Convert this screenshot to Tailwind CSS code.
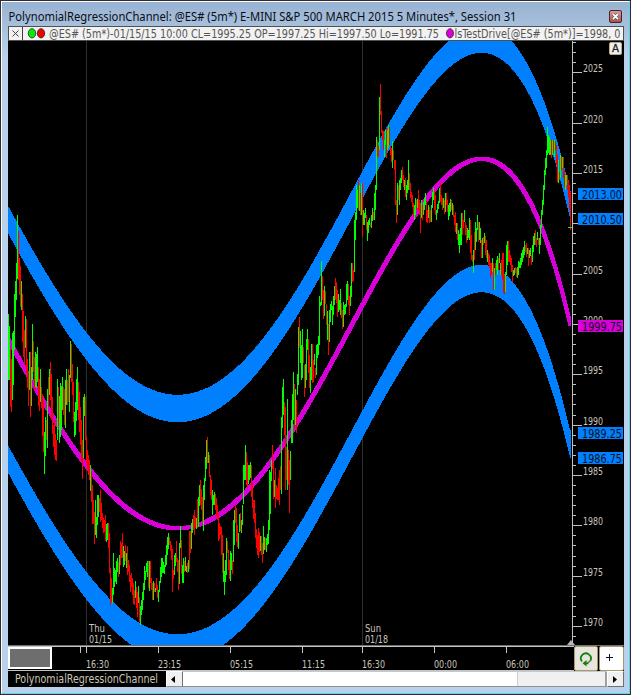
<!DOCTYPE html>
<html lang="en">
<head>
    <meta charset="UTF-8">
    <meta name="viewport" content="width=device-width, initial-scale=1.0">
    <title>PolynomialRegressionChannel</title>
    <script src="https://cdn.jsdelivr.net/npm/@tailwindcss/browser@4"></script>
</head>
<body class="bg-[#b9d1ea] overflow-hidden">
    <div class="flex flex-col w-[631px] h-[695px] border border-[#302c33]">
        <div class="flex flex-col flex-1 border border-t-white border-l-white border-r-[#5ed0e8] border-b-[#5ed0e8] bg-[#b9d1ea] bg-linear-to-b from-[#98b3d2] from-0% to-[#b9d1ea] to-8% pl-1.5 pr-[5px]">

            <!-- Title bar -->
            <div class="flex items-center justify-between h-6">
                <svg class="block w-[540px] h-6" viewBox="8 2 540 24" font-family="Noto Sans, sans-serif" font-size="12.5" fill="#0c0c14">
                    <text x="8.5" y="21" textLength="508" lengthAdjust="spacingAndGlyphs">PolynomialRegressionChannel: @ES# (5m*) E-MINI S&amp;P 500 MARCH 2015 5 Minutes*, Session 31</text>
                </svg>
                <button class="flex items-center justify-center w-[13px] h-[13px] mr-0.5 mt-1 rounded-[2px] border border-[#4f2023] bg-linear-to-b from-[#d29c98] to-[#a8544f]">
                    <svg class="block w-[7px] h-[7px]" viewBox="0 0 7 7"><path d="M1 1L6 6M6 1L1 6" stroke="#454555" stroke-width="3"/><path d="M1 1L6 6M6 1L1 6" stroke="#fff" stroke-width="1.8"/></svg>
                </button>
            </div>

            <!-- Status line -->
            <div class="h-[15px] w-[616px] border border-[#505050] bg-[#f2f2f2] overflow-hidden">
                <svg class="block w-[614px] h-[13px]" viewBox="9 27 614 13" font-family="DejaVu Sans Condensed, DejaVu Sans, sans-serif" font-stretch="condensed" font-size="11.5" fill="#555">
                    <path d="M12.5 30.5L18.5 36.5M18.5 30.5L12.5 36.5" stroke="#444" stroke-width="1"/>
                    <path d="M22.5 26V41" stroke="#404040"/>
                    <ellipse cx="32" cy="33.3" rx="3.7" ry="4.6" fill="#00f000" stroke="#222" stroke-width=".8"/>
                    <ellipse cx="41" cy="33.3" rx="3.7" ry="4.6" fill="#f00000" stroke="#222" stroke-width=".8"/>
                    <text x="49" y="37.5" textLength="390" lengthAdjust="spacingAndGlyphs">@ES# (5m*)-01/15/15 10:00 CL=1995.25 OP=1997.25 Hi=1997.50 Lo=1991.75</text>
                    <ellipse cx="450" cy="33.3" rx="3.6" ry="4.6" fill="#d800d8" stroke="#333" stroke-width=".8"/>
                    <text x="454.5" y="37.5" textLength="166" lengthAdjust="spacingAndGlyphs">lsTestDrive[@ES# (5m*)]=1998, 0</text>
                </svg>
            </div>

            <!-- Plot -->
            <svg id="plot" class="block w-[616px] h-[604px] bg-black" viewBox="8 41 616 604" font-family="DejaVu Sans Condensed, DejaVu Sans, sans-serif" font-stretch="condensed">
                <path d="M86.5 41V645M362.5 41V645" stroke="#303030" shape-rendering="crispEdges"/>
                <g id="bands" fill="#0080ff" shape-rendering="crispEdges"></g>
                <path id="mid" fill="#d800d8" shape-rendering="crispEdges"/>
                <path id="down" stroke="#ff0000" shape-rendering="crispEdges"/>
                <path id="up" stroke="#00ff00" shape-rendering="crispEdges"/>
                <path id="ticks" stroke="#c0c0c0" fill="none" shape-rendering="crispEdges"/>
                <path d="M567 645L571 640L575 645Z" fill="#b8b8b8"/>
                <g font-size="10.5" fill="#c9c5bd">
                    <text x="89" y="632" textLength="16" lengthAdjust="spacingAndGlyphs">Thu</text>
                    <text x="89" y="643" textLength="23" lengthAdjust="spacingAndGlyphs">01/15</text>
                    <text x="365" y="632" textLength="16" lengthAdjust="spacingAndGlyphs">Sun</text>
                    <text x="365" y="643" textLength="23" lengthAdjust="spacingAndGlyphs">01/18</text>
                </g>
                <g id="prices" font-size="10.5" fill="#c9c5bd"></g>
                <g id="tags" font-size="11.5" fill="#101018"></g>
                <rect x="609.5" y="42.5" width="12" height="12" rx="1.5" fill="#efefec" stroke="#b9aa88"/>
                <text x="612" y="51.5" font-size="10.5" fill="#20242c" stroke="#20242c" stroke-width=".3" textLength="7" lengthAdjust="spacingAndGlyphs">A</text>
            </svg>

            <!-- Time axis -->
            <div class="flex h-[26px] w-[616px] bg-black border-t border-[#707070]">
                <svg class="block w-[566px] h-[25px]" viewBox="8 646 566 25" font-family="DejaVu Sans Condensed, DejaVu Sans, sans-serif" font-stretch="condensed" font-size="10.5" fill="#c9c5bd">
                    <path d="M8 646.5H574M8 670.5H574M80.5 647V653M86.5 647V653M158.5 647V653M230.5 647V653M302.5 647V653M362.5 647V653M434.5 647V653M506.5 647V653" stroke="#c4c4c4" shape-rendering="crispEdges"/>
                    <rect x="9" y="648" width="42" height="20" fill="#6e6e6e" stroke="#fff" stroke-width="2"/>
                    <text x="86" y="667.5" textLength="23" lengthAdjust="spacingAndGlyphs">16:30</text>
                    <text x="158" y="667.5" textLength="23" lengthAdjust="spacingAndGlyphs">23:15</text>
                    <text x="230" y="667.5" textLength="23" lengthAdjust="spacingAndGlyphs">05:15</text>
                    <text x="302" y="667.5" textLength="23" lengthAdjust="spacingAndGlyphs">11:15</text>
                    <text x="362" y="667.5" textLength="23" lengthAdjust="spacingAndGlyphs">16:30</text>
                    <text x="434" y="667.5" textLength="23" lengthAdjust="spacingAndGlyphs">00:00</text>
                    <text x="506" y="667.5" textLength="23" lengthAdjust="spacingAndGlyphs">06:00</text>
                </svg>
                <button class="flex items-center justify-center w-[24px] h-[25px] rounded-[2px] border border-[#a89870] bg-[#e8e6dc]">
                    <svg class="block w-[14px] h-[16px]" viewBox="0 0 14 16" fill="none">
                        <path d="M3 10.5A5 5 0 1 1 11.3 9.8" stroke="#128018" stroke-width="1.8"/>
                        <path d="M11.3 9.8L9 11.5" stroke="#666" stroke-width="1.5"/>
                        <path d="M3.5 12.3L7.5 9V11.2H9.5V13.2H7.5V15.6Z" fill="#108018"/>
                    </svg>
                </button>
                <button class="flex items-center justify-center w-[25px] h-[25px] ml-px pr-1 pb-0.5 rounded-[2px] border border-[#a89870] bg-white">
                    <svg class="block w-[7px] h-[7px]" viewBox="0 0 7 7"><path d="M0 3.5H7M3.5 0V7" stroke="#101020" shape-rendering="crispEdges"/></svg>
                </button>
            </div>

            <!-- Workspace tab and scroll bar -->
            <div class="flex h-4 w-[616px]">
                <div class="w-[158px] bg-black">
                    <svg class="block w-[158px] h-4" viewBox="8 671 158 16" font-family="DejaVu Sans Condensed, DejaVu Sans, sans-serif" font-stretch="condensed" font-size="11.5" fill="#ccc6b8">
                        <text x="15" y="683" textLength="143" lengthAdjust="spacingAndGlyphs">PolynomialRegressionChannel</text>
                    </svg>
                </div>
                <button class="flex items-center justify-center w-[17px] h-4 pr-1 bg-[#f0f0f0] border border-l-white border-t-white border-r-[#707070] border-b-[#909090]">
                    <svg class="block w-1 h-[7px]" viewBox="0 0 4 7"><path d="M4 0V7L0 3.5Z" fill="#000"/></svg>
                </button>
                <div class="flex justify-end flex-1 bg-white border-t border-b border-t-[#c8c8c8] border-b-[#909090]">
                    <div class="w-[90px] bg-[#f0f0f0] border-l border-l-[#d0d0d0] border-r-2 border-r-[#a0a0a0]"></div>
                </div>
                <button class="flex items-center justify-center w-[17px] h-4 pr-0.5 bg-[#f0f0f0] border border-l-white border-t-white border-r-[#707070] border-b-[#707070]">
                    <svg class="block w-1 h-[7px]" viewBox="0 0 4 7"><path d="M0 0V7L4 3.5Z" fill="#000"/></svg>
                </button>
            </div>
        </div>
    </div>

    <script>
        // Samples of the regression curve, [x, y]
        const curve = [
            [8, 339.5], [25, 370], [43, 400], [60, 428], [86.7, 466.5], [100, 482.5], [117, 500.5], [133, 514], [147, 521.5],
            [160, 525.7], [176, 527], [188, 526], [200, 522.5], [215, 516], [232, 506], [250, 488.5], [265, 470.5], [283, 444.5], [297, 422.5], [310, 400.5],
            [320, 383], [340, 345.5], [362, 304.5], [380, 272], [407, 227], [430, 194.5], [441, 181.5], [458, 166.5],
            [470, 161], [481, 159.2], [492, 161], [500, 165], [510, 173], [520, 185], [530, 202], [540, 224.5], [555, 267], [564, 299], [570, 325]
        ];
        const scale = x => (x - 289) / 281;

        // Least squares polynomial through the samples
        function fit(points, degree) {
            const n = degree + 1;
            const m = Array.from({ length: n }, () => new Array(n + 1).fill(0));
            points.forEach(([x, y]) => {
                const t = scale(x);
                for (let i = 0; i < n; i++) {
                    for (let j = 0; j < n; j++) m[i][j] += t ** (i + j);
                    m[i][n] += y * t ** i;
                }
            });
            for (let i = 0; i < n; i++) {
                for (let k = 0; k < n; k++) {
                    if (k === i) continue;
                    const f = m[k][i] / m[i][i];
                    for (let j = i; j <= n; j++) m[k][j] -= f * m[i][j];
                }
            }
            return m.map((row, i) => row[n] / row[i]);
        }

        const coef = fit(curve, 7);
        const curveY = x => coef.reduce((sum, c, i) => sum + c * scale(x) ** i, 0);

        function ribbon(top, bottom) {
            let upper = '', lower = '';
            for (let x = 8; x <= 571; x++) {
                const y = curveY(Math.min(x, 570));
                upper += (x === 8 ? 'M' : 'L') + x + ' ' + (y + top).toFixed(1);
                lower = 'L' + x + ' ' + (y + bottom).toFixed(1) + lower;
            }
            return upper + lower + 'Z';
        }

        document.getElementById('bands').innerHTML = `<path d="${ribbon(-133.5, -106)}"/><path d="${ribbon(106, 133.5)}"/>`;
        // The centre line is drawn with a square pen, so steep parts get taller
        let mid = '';
        for (let x = 8; x < 571; x++) {
            const a = curveY(Math.max(x - 1.5, 8)), b = curveY(Math.min(x + 2, 570));
            mid += `M${x} ${(Math.min(a, b) - 2).toFixed(1)}h1V${(Math.max(a, b) + 2).toFixed(1)}h-1Z`;
        }
        document.getElementById('mid').setAttribute('d', mid);

        // One price bar per pixel: first x of the row, then colour and high-low
        const bars = `
8 g314-380 g326-380 r349-407 r359-412 g333-400 g331-385 g294-350 g281-317 g263-300 g215-279
18 r231-280 r258-295 r266-307 g281-310 r294-342 r311-357 r330-365 g316-348 r319-373 r359-388
28 r373-406 g352-390 r352-417 g367-406 g324-380 r341-372 r357-390 g352-387 g354-388 g347-382
38 r367-406 r379-411 g369-402 r387-408 r394-436 r402-452 g432-474 g417-456 r420-440 g389-448
48 r377-407 g369-395 r362-400 r374-420 r397-434 r425-447 r420-455 r434-460 r440-461 g379-440
58 r387-425 g396-443 g383-437 g386-430 g377-410 r387-415 r389-425 g380-428 g369-405 r380-405
68 r369-402 g375-412 g341-378 r344-382 r364-395 r382-422 g412-437 g402-435 g379-421 g367-410
78 r382-420 r392-432 r407-445 r420-462 r440-479 g397-458 g394-416 r397-440 r437-463 r450-470
88 r455-475 r460-480 g465-491 r472-502 r485-524 r500-524 r512-544 g500-535 g517-538 g495-525
98 g495-517 r498-512 r490-522 r503-520 r513-528 r518-533 r520-532 r515-541 g524-542 g523-540
108 r523-548 r533-573 r568-605 r578-602 g588-603 g553-595 g568-587 g570-582 g561-584 g558-572
118 r562-577 g555-574 r541-565 r543-558 r533-558 g546-567 g551-565 r545-561 g553-568 r546-575
128 r560-572 r565-582 r575-592 r573-587 r578-595 r583-604 r590-605 g581-598 r587-608 r592-617
138 g586-603 r597-622 g606-625 g600-615 g592-610 g583-600 g566-590 g571-580 g563-572 g561-577
148 r561-588 g561-591 r561-583 r578-590 r583-600 g581-600 r583-592 g588-592 r578-590 r585-598
158 g590-602 g581-592 g567-583 g558-577 g558-573 g562-573 g565-574 g555-567 g545-565 g537-555
168 g533-549 r537-545 r541-551 r545-560 r549-592 r570-579 g555-575 g553-566 r541-562 r558-572
178 r560-590 g543-584 g526-548 r540-574 g565-583 g558-583 r561-572 g557-571 g566-572 r563-573
188 g560-572 r531-569 r531-553 g523-549 g519-533 r515-530 r510-535 r517-528 g518-529 r499-528
198 g497-527 g485-506 r480-505 r489-510 r497-522 g485-531 g478-500 g457-481 g440-469 r437-463
208 g452-463 r455-477 r475-495 r480-500 g490-515 g495-505 g492-505 r494-510 r498-516 r505-520
218 r514-541 r523-539 r526-535 r527-555 r535-573 g553-582 g571-595 g560-582 g538-575 r541-553
228 r550-570 r560-579 g551-581 g553-570 r560-574 g520-562 g510-545 r505-523 r508-542 r525-547
238 g533-549 g514-532 r513-531 g520-533 g505-525 g465-504 g465-480 g445-480 r452-485 r462-488
248 g465-484 g465-480 g462-478 r465-497 r483-508 r500-519 r500-523 r513-538 r529-548 r535-555
258 r528-558 r532-552 g536-551 r536-555 r543-563 g526-554 g537-550 r538-550 g538-552 g534-545
268 g520-544 g470-530 g472-514 g460-481 r445-469 r463-499 g480-497 r468-508 r485-499 r488-500
278 r478-500 r470-505 r466-490 g417-494 g387-428 g379-415 r402-435 r407-490 r447-480 g399-490
288 r450-485 r460-513 g451-480 g420-443 g394-443 g372-420 r384-428 g389-425 r400-433 g374-395
298 g327-385 r317-348 g331-363 g345-380 g329-378 r347-363 r365-397 g364-388 g339-380 g329-350
308 r339-373 r355-388 g367-393 g344-380 r344-383 r360-382 g354-365 r368-378 g345-375 g344-358
318 g336-355 g296-345 g302-306 g261-305 r276-300 r290-319 g286-316 r291-304 r304-325 g311-340
328 r324-355 g310-342 g304-322 g301-310 g306-325 g296-315 g286-305 r278-300 r282-303 r290-317
338 g294-312 g300-310 g289-315 r303-318 r310-329 g302-327 g305-315 g304-314 g284-307 g281-300
348 r284-305 r296-315 g286-306 g263-297 r263-282 r270-281 g220-272 g212-240 g185-220 g190-208
358 r180-210 g185-211 r193-215 g183-215 r183-237 g210-225 g213-225 g208-218 r215-230 g222-241
368 g220-233 g218-225 r223-227 g215-228 g208-221 r212-220 g193-220 g185-210 g137-190 r140-156
378 r146-157 g97-150 r84-115 r111-133 r130-140 r131-150 g140-157 g130-145 r128-158 g130-150
388 g125-148 r127-145 r146-155 r148-162 g141-168 r150-160 r160-170 r160-205 r200-223 g183-215
398 r185-200 g180-205 g178-190 g170-183 r167-180 r175-187 g180-190 r178-197 g185-200 g180-193
408 g160-190 r173-190 r183-198 r192-202 r195-207 r203-217 g205-220 g198-215 r200-210 g199-208
418 r190-210 r200-215 r205-233 g200-218 r205-220 g202-215 g198-210 g193-205 r200-222 r210-223
428 g205-218 r207-223 r210-222 g205-222 g192-208 g188-200 r190-210 r195-215 g210-220 g204-213
438 g201-209 g188-203 r183-202 r195-205 r198-210 g198-208 r200-214 g193-212 r193-205 r200-212
448 g205-220 g203-216 g199-212 r200-210 g203-215 r205-217 r215-225 r212-232 g223-234 r223-240
458 g230-245 g234-253 g228-245 g213-245 r213-235 r220-228 g210-222 r222-235 r225-243 g228-240
468 g230-238 g218-240 r220-253 r235-260 r255-262 g250-273 r232-260 g222-250 g228-242 g215-230
478 r222-242 g222-240 g228-243 r240-258 g238-258 r237-245 g233-243 r236-255 r240-258 g250-262
488 r253-265 r255-268 r263-278 r263-275 g258-272 r263-290 g268-290 r263-275 g260-270 g256-275
498 r258-270 g253-263 g263-275 r260-275 r253-280 r253-293 r275-294 g272-292 g245-275 g241-265
508 r241-262 r250-262 r255-265 r258-272 r265-282 g270-276 g268-275 r267-273 r268-277 g267-278
518 g261-275 g262-268 g258-268 g253-265 g250-262 g247-258 g241-255 r245-252 r243-257 g248-254
528 r248-266 g250-258 g248-256 r255-265 g245-262 g236-252 g233-245 r230-245 r238-247 g232-240
538 r238-245 g238-254 g225-245 g210-228 g200-215 g185-205 g170-190 g158-175 g150-168 g127-155
548 g135-153 g137-155 g140-155 r140-158 g140-155 r140-153 g140-157 r142-150 r145-165 r155-182
558 g160-183 r172-180 g155-178 r156-170 g157-168 r157-178 r170-187 g175-190 g175-185 r175-190
568 r180-198 r185-210 r192-230`;

        let up = '', down = '';
        bars.trim().split('\n').forEach(row => {
            const [start, ...items] = row.split(' ');
            items.forEach((item, i) => {
                const [hi, lo] = item.slice(1).split('-');
                const d = `M${Number(start) + i + 0.5} ${hi}V${lo}`;
                if (item[0] === 'g') up += d; else down += d;
            });
        });
        up += 'M568 227.5H572';
        document.getElementById('up').setAttribute('d', up);
        document.getElementById('down').setAttribute('d', down);

        // Price axis
        const priceY = p => 626 - (p - 1970) * 10.07;
        let ticks = 'M572.5 41V645', prices = '';
        for (let p = 1969; p <= 2028; p++) {
            const y = Math.round(priceY(p)) + 0.5;
            ticks += `M573 ${y}h${p % 5 === 0 ? 9 : 3}`;
            if (p % 5 === 0 && p !== 2010) {
                prices += `<text x="583" y="${y - 0.5}" textLength="20" lengthAdjust="spacingAndGlyphs">${p}</text>`;
            }
        }
        document.getElementById('ticks').setAttribute('d', ticks);
        document.getElementById('prices').innerHTML = prices;

        const tags = [
            ['2013.00', 188, '#0080ff'], ['2010.50', 213, '#0080ff'], ['1999.75', 320, '#d800d8'],
            ['1989.25', 427, '#0080ff'], ['1986.75', 452, '#0080ff']
        ];
        document.getElementById('tags').innerHTML = tags.map(([label, y, color]) =>
            `<rect x="578" y="${y}" width="45" height="12" fill="${color}"/>` +
            `<text x="582" y="${y + 11}" textLength="40" lengthAdjust="spacingAndGlyphs">${label}</text>`
        ).join('');
    </script>
</body>
</html>
